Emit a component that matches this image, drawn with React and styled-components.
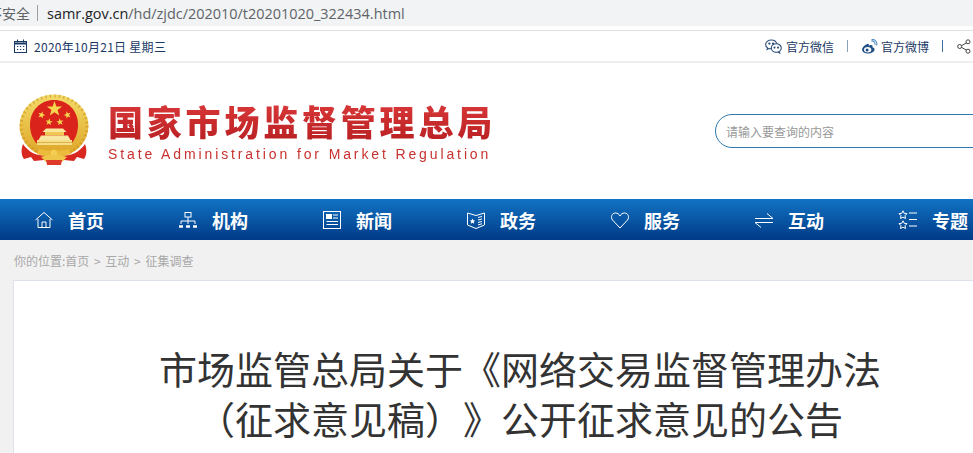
import React from 'react'
import styled, { createGlobalStyle } from 'styled-components'

const cjk = '"Noto Sans CJK SC", "Liberation Sans", sans-serif'

const Global = createGlobalStyle`
    html, body {
        margin: 0;
        padding: 0;
        background: #f1f1f1;
        overflow: hidden;
    }
`

const Page = styled.div`
    width: 1040px;
    height: 453px;
    overflow: hidden;
    font-family: ${cjk};
`

const AddressBar = styled.div`
    height: 26px;
    background: #f1f3f4;
    display: flex;
    align-items: center;
    font-family: "Open Sans", ${cjk};
    font-size: 14.45px;
    white-space: nowrap;
    overflow: hidden;
`

const Secure = styled.span`
    margin-left: -12px;
    color: #5f6368;
    font-family: ${cjk};
    font-size: 14px;
`

const AddressDivider = styled.span`
    width: 1px;
    height: 16px;
    background: #9aa0a6;
    margin: 0 9px 0 7px;
`

const Host = styled.span`
    color: #202124;
`

const Path = styled.span`
    color: #5f6368;
`

const Gap = styled.div`
    height: 4px;
    background: #fff;
`

const TopBar = styled.div`
    height: 30px;
    background: #fff;
    border-top: 1px solid #dedfe0;
    border-bottom: 2px solid #eee;
    display: flex;
    align-items: center;
    justify-content: space-between;
    padding: 0 69px 0 14px;
    font-size: 12px;
    color: #1b3a66;
`

const DateLabel = styled.div`
    display: flex;
    align-items: center;
    gap: 7px;
    letter-spacing: 0.28px;
`

const Links = styled.div`
    display: flex;
    align-items: center;
`

const LinkItem = styled.div`
    display: flex;
    align-items: center;
    gap: ${p => p.$gap}px;
`

const Divider = styled.span`
    width: 1px;
    height: 12px;
    margin: 0 ${p => p.$right}px 0 ${p => p.$left}px;
    background: ${p => p.$color};
`

const Masthead = styled.div`
    height: 136px;
    background: #fff;
    display: flex;
    align-items: center;
    padding-left: 19px;
`

const Emblem = styled.svg`
    width: 70px;
    height: 72px;
    flex: none;
    margin-bottom: 2px;
    filter: blur(0.4px);
`

const Brand = styled.div`
    margin: 0 0 0 19px;
    width: 390px;
    flex: none;
`

const BrandName = styled.div`
    font-size: 35px;
    line-height: 44px;
    font-weight: 900;
    letter-spacing: 3.8px;
    white-space: nowrap;
    background: linear-gradient(#dc3a3a, #b81f22);
    -webkit-background-clip: text;
    background-clip: text;
    color: transparent;
    filter: blur(0.4px);
`

const BrandEnglish = styled.div`
    font-family: "Liberation Sans", sans-serif;
    font-size: 14px;
    line-height: 18px;
    margin-top: 2px;
    letter-spacing: 2.88px;
    white-space: nowrap;
    color: #c8322f;
    filter: blur(0.25px);
`

const Search = styled.div`
    margin: 0 0 0 217px;
    width: 320px;
    height: 34px;
    box-sizing: border-box;
    flex: none;
    border: 1px solid #2f77aa;
    border-radius: 17px;
    padding-left: 10px;
    display: flex;
    align-items: center;
    background: #fff;
    font-size: 12px;
    color: #999;
`

const Nav = styled.nav`
    height: 41px;
    background: linear-gradient(#1273c4, #003a86);
    display: flex;
    padding-left: 34px;
`

const NavItem = styled.div`
    width: 144px;
    flex: none;
    display: flex;
    align-items: center;
    gap: 14px;
    color: #fff;
    font-size: 18px;
    font-weight: 700;
`

const NavIcon = styled.svg`
    width: 20px;
    height: 20px;
    flex: none;
    fill: none;
    stroke: #fff;
    stroke-width: 1;
`

const Crumbs = styled.div`
    height: 40px;
    padding-left: 14px;
    display: flex;
    align-items: center;
    font-size: 12px;
    word-spacing: 2px;
    color: #a8a8a8;
    white-space: pre;
`

const Card = styled.main`
    margin-left: 13px;
    width: 1014px;
    height: 300px;
    box-sizing: border-box;
    background: #fff;
    border: 1px solid #dde2ea;
    padding-top: 62px;
`

const Title = styled.h1`
    margin: 0;
    font-size: 38px;
    line-height: 50px;
    font-weight: 400;
    color: #333;
    text-align: center;
    text-spacing-trim: space-all;
`

const Star = ({ x, y, r, rot = 0 }) => {
    const pts = []
    for (let i = 0; i < 10; i++) {
        const a = (Math.PI / 5) * i - Math.PI / 2 + rot
        const d = i % 2 ? r * 0.4 : r
        pts.push(`${(x + d * Math.cos(a)).toFixed(2)},${(y + d * Math.sin(a)).toFixed(2)}`)
    }
    return <polygon points={pts.join(' ')} fill="#f5d64e" />
}

const NationalEmblem = () => (
    <Emblem viewBox="0 0 70 72">
        <defs>
            <linearGradient id="gold" x1="0" y1="0" x2="0" y2="1">
                <stop offset="0" stopColor="#f4dc6a" />
                <stop offset="1" stopColor="#dda324" />
            </linearGradient>
        </defs>
        <ellipse cx="35" cy="32" rx="34.500" ry="31.500" fill="url(#gold)" />
        <ellipse cx="35" cy="32" rx="33" ry="30" fill="none" stroke="#c48a1c" strokeWidth="3" strokeDasharray="1.500 3" opacity="0.55" />
        <path d="M11 31C11 16 22 6 35 6s24 10 24 25c0 8-3 15-8 20H19c-5-5-8-12-8-20z" fill="#d9231b" />
        <Star x={35.500} y={15} r={8} />
        <Star x={22.500} y={21} r={3.800} rot={0.3} />
        <Star x={30} y={28} r={3.800} rot={0.15} />
        <Star x={41} y={28} r={3.800} rot={-0.15} />
        <Star x={48.500} y={21} r={3.800} rot={-0.3} />
        <path d="M27 34.500h17l3.500 3.500h-24z" fill="#f8e79a" />
        <rect x="26" y="38" width="19" height="3.500" fill="#f0c750" />
        <path d="M22 41.500h27l2.500 4.500h-32z" fill="#f7e6a0" />
        <rect x="18" y="46" width="35" height="5" fill="#f5dd8a" />
        <path d="M18 48.500h35" stroke="#d9a434" strokeWidth="0.8" />
        <path d="M4 50c-2 5-2 11 1 15l7-2 3 4 10-1c3 1 5 1 10 1s7 0 10-1l10 1 3-4 7 2c3-4 3-10 1-15-4 6-10 10-16 11-10 2-20 2-30 0-6-1-12-5-16-11z" fill="#d8281f" />
        <path d="M20 55c8 2 22 2 30 0l2 5c-9 3-25 3-34 0z" fill="#ecbb3c" />
        <circle cx="35" cy="59" r="3.200" fill="#f4cf54" />
        <path d="M22 63l7-2h12l7 2-5 5H27z" fill="#f0c64a" />
        <path d="M27 66h16l-1 5H28z" fill="#dd3a2c" />
    </Emblem>
)

const CalendarIcon = () => (
    <svg width="13" height="14" viewBox="0 0 13 14" fill="none" stroke="#1b3a66">
        <rect x="0.500" y="2.500" width="12" height="11" />
        <path d="M0.500 4.500h12" strokeWidth="2" />
        <path d="M3.500 0.500v3M9.500 0.500v3" />
        <path d="M3 7.500h1.200M6 7.500h1.200M9 7.500h1.200M3 10.500h1.200M6 10.500h1.200M9 10.500h1.200" />
    </svg>
)

const WechatIcon = () => (
    <svg width="17" height="15" viewBox="0 0 17 15" fill="#fff" stroke="#2a4d78" strokeWidth="1.100">
        <path d="M11.900 5C11.300 2.600 9.100 1 6.300 1 3.100 1 .6 3 .6 5.500c0 1.400.8 2.600 2 3.400l-.5 1.500 1.800-.9c.8.200 1.500.3 2.200.3" />
        <ellipse cx="11.300" cy="9" rx="5" ry="4.200" />
        <path d="M14 12.500l.7 1.600-2-1" />
        <circle cx="4.400" cy="4.600" r="0.600" fill="#2a4d78" />
        <circle cx="8" cy="4.600" r="0.600" fill="#2a4d78" />
        <circle cx="9.500" cy="8.600" r="0.500" fill="#2a4d78" />
        <circle cx="13" cy="8.600" r="0.500" fill="#2a4d78" />
    </svg>
)

const WeiboIcon = () => (
    <svg width="17" height="15" viewBox="0 0 15 14">
        <path d="M6 4.500C3.200 5.400.6 8 .6 10c0 2.200 2.800 3.500 5.400 3.500 3.400 0 6.200-1.900 6.200-3.800 0-1.200-1.100-1.800-2-2 .4-1.200.1-2-1.200-2-.8 0-1.600.3-2.200.6.300-1.300-.1-2.200-.8-1.800z" fill="#1f4e86" />
        <ellipse cx="5.800" cy="10" rx="3.400" ry="2.500" fill="#fff" />
        <circle cx="5.300" cy="10.200" r="1.400" fill="#1f4e86" />
        <path d="M9.200 1.800c2-.4 4 1.300 3.400 3.600M9.400 0.500c3.200-.5 5.800 2.300 4.700 5.600" fill="none" stroke="#4d8cc4" strokeWidth="1" />
    </svg>
)

const ShareIcon = () => (
    <svg width="14" height="15" viewBox="0 0 14 15" fill="#fff" stroke="#444" strokeWidth="1">
        <path d="M3 7.500L11 3M3 7.500l8 4.500" />
        <circle cx="2.700" cy="7.500" r="2" />
        <circle cx="11" cy="2.800" r="2" />
        <circle cx="11" cy="12.200" r="2" />
    </svg>
)

const navItems = [
    {
        label: '首页',
        icon: (
            <>
                <path d="M1.500 10L10 2.500 18.500 10" />
                <path d="M4 9v8.500h12V9" />
                <path d="M8 17.500V12h4v5.500" />
            </>
        ),
    },
    {
        label: '机构',
        icon: (
            <>
                <rect x="7" y="2.500" width="6" height="4.500" />
                <path d="M10 7v4M3 14v-3h14v3M10 11v3" />
                <path d="M1 16.500h4M8 16.500h4M15 16.500h4" strokeWidth="2.500" />
            </>
        ),
    },
    {
        label: '新闻',
        icon: (
            <>
                <rect x="1.500" y="1.500" width="17" height="17" />
                <rect x="4.500" y="4.500" width="5" height="4" fill="#fff" />
                <path d="M11 5h5M11 8h5M4.500 11.500h11.500M4.500 14.500h11.500" />
            </>
        ),
    },
    {
        label: '政务',
        icon: (
            <>
                <path d="M1.500 3l8.500 2.500L18.500 3v12L10 18.500 1.500 15z" />
                <path d="M12 7.500l4-1M12 10l4-1M12 12.500l4-1M12 15l4-1.300" />
                <path d="M6.500 8.500l.8 1.800 1.900.2-1.400 1.300.4 1.900-1.700-1-1.700 1 .4-1.900-1.400-1.300 1.900-.2z" fill="#fff" stroke="none" />
            </>
        ),
    },
    {
        label: '服务',
        icon: <path d="M10 18L2.500 10C.5 7.500 1.500 3 5.500 3c2 0 3.500 1 4.500 3 1-2 2.500-3 4.500-3 4 0 5 4.500 3 7z" />,
    },
    {
        label: '互动',
        icon: <path d="M1 8.500h18l-6-5M19 12.500H1l6 5" />,
    },
    {
        label: '专题',
        icon: (
            <>
                <path d="M5 .8l1.200 2.500 2.800.4-2 2 .5 2.800L5 7.200 2.500 8.500 3 5.700l-2-2 2.800-.4z" />
                <path d="M5 10.800l1.200 2.500 2.800.4-2 2 .5 2.800L5 17.200l-2.500 1.300.5-2.800-2-2 2.800-.4z" />
                <path d="M11 3h8M11 9.500h8M11 16h8" />
            </>
        ),
    },
]

const App = () => {
    return (
        <Page>
            <Global />
            <AddressBar>
                <Secure>不安全</Secure>
                <AddressDivider />
                <Host>samr.gov.cn</Host>
                <Path>/hd/zjdc/202010/t20201020_322434.html</Path>
            </AddressBar>
            <Gap />
            <TopBar>
                <DateLabel>
                    <CalendarIcon />
                    2020年10月21日 星期三
                </DateLabel>
                <Links>
                    <LinkItem $gap={4}>
                        <WechatIcon />
                        官方微信
                    </LinkItem>
                    <Divider $left={13} $right={13} $color="#8aa0b8" />
                    <LinkItem $gap={3}>
                        <WeiboIcon />
                        官方微博
                    </LinkItem>
                    <Divider $left={13} $right={14} $color="#3f6d9c" />
                    <ShareIcon />
                </Links>
            </TopBar>
            <Masthead>
                <NationalEmblem />
                <Brand>
                    <BrandName>国家市场监督管理总局</BrandName>
                    <BrandEnglish>State Administration for Market Regulation</BrandEnglish>
                </Brand>
                <Search>请输入要查询的内容</Search>
            </Masthead>
            <Nav>
                {navItems.map(item => (
                    <NavItem key={item.label}>
                        <NavIcon viewBox="0 0 20 20">{item.icon}</NavIcon>
                        {item.label}
                    </NavItem>
                ))}
            </Nav>
            <Crumbs>你的位置:首页 &gt; 互动 &gt; 征集调查</Crumbs>
            <Card>
                <Title>
                    市场监管总局关于《网络交易监督管理办法
                    <br />
                    （征求意见稿）》公开征求意见的公告
                </Title>
            </Card>
        </Page>
    )
}

export default App
